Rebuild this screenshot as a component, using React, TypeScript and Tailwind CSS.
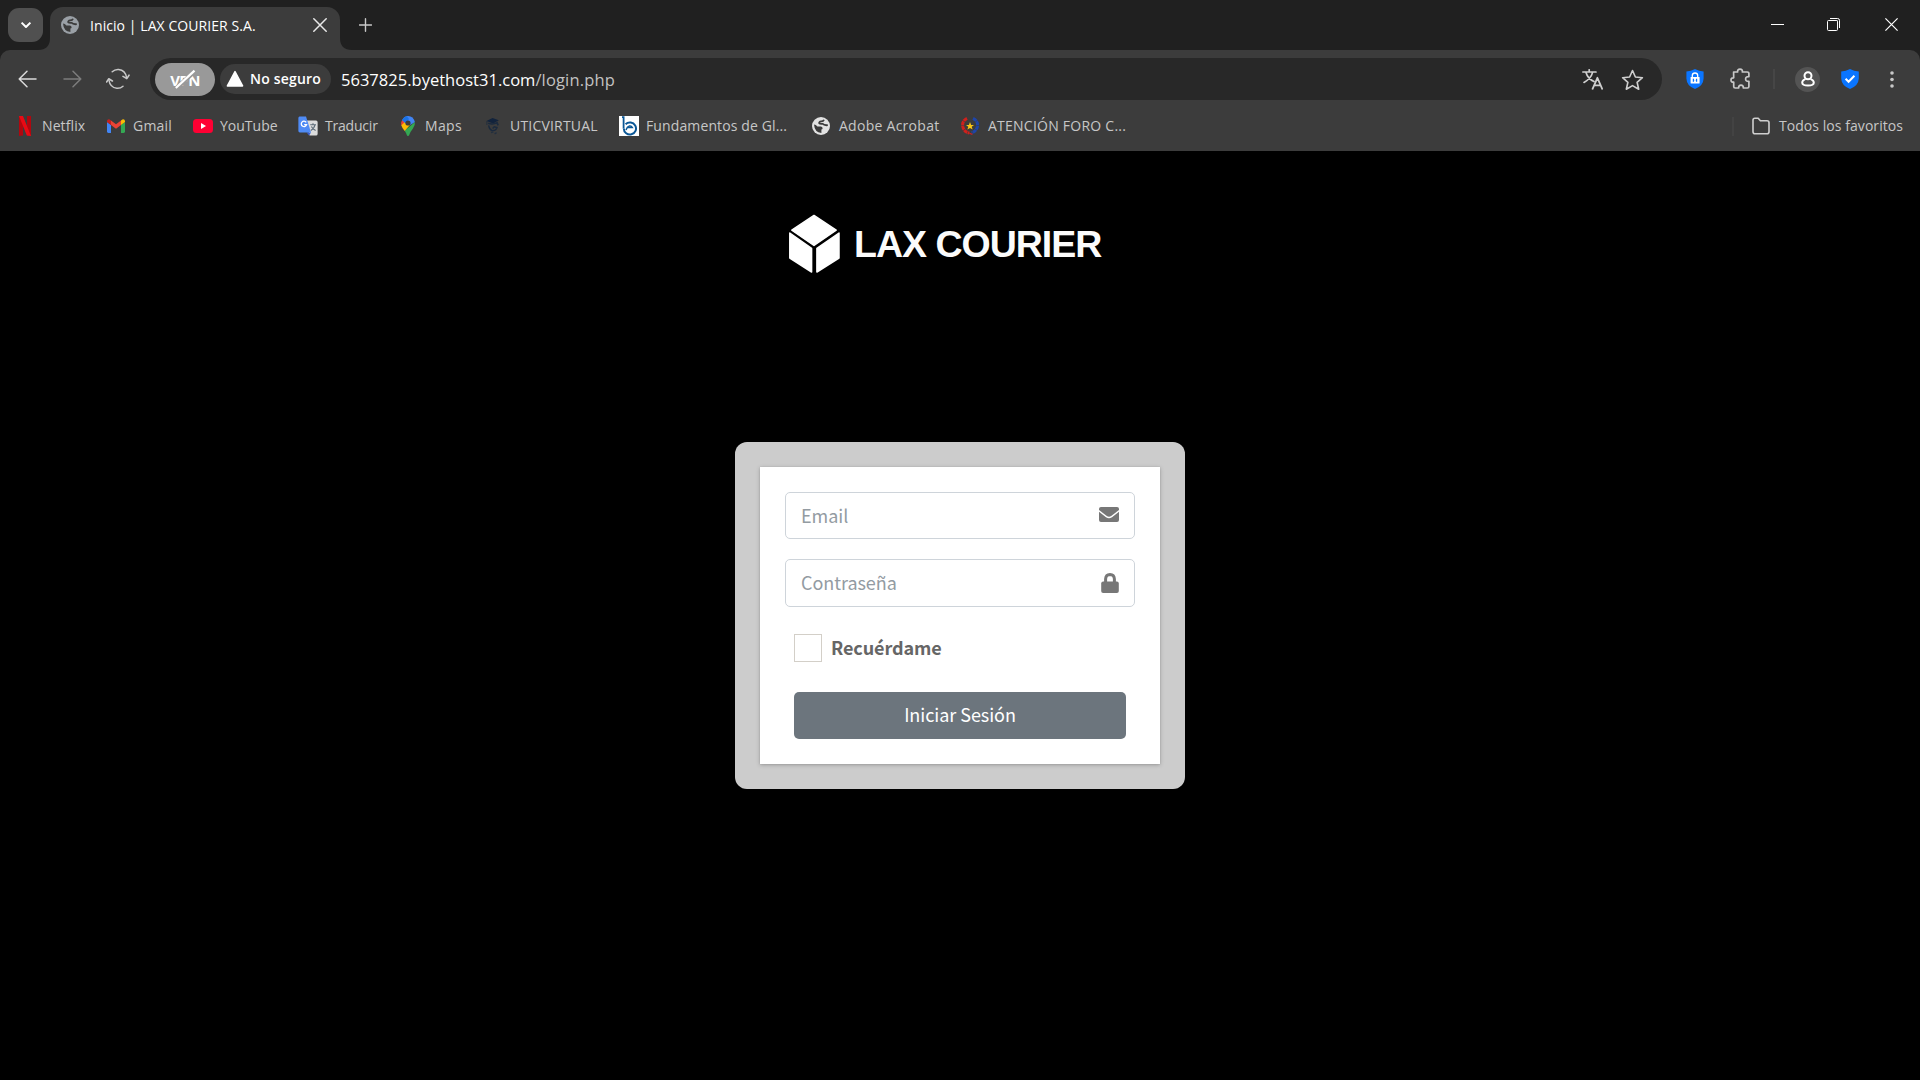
import React from "react";

const stroke = (w = 1.5, c = "#cfcfcf") => ({
  fill: "none",
  stroke: c,
  strokeWidth: w,
  strokeLinecap: "round" as const,
  strokeLinejoin: "round" as const,
});

function GlobeIcon({ color, size = 18 }: { color: string; size?: number }) {
  return (
    <svg width={size} height={size} viewBox="0 0 18 18">
      <circle cx="9" cy="9" r="9" fill={color} />
      <path d="M2 7.6Q4 7.6 5.4 9.4H9Q10.8 9.8 10.6 12L9.4 12.6V15.9Q2.6 15.6 2 7.6Z" fill="#3c3c3c" />
      <path d="M12 2.8Q11.4 4.4 9.2 4.4Q6.8 4.8 7.2 6.2Q7.8 7 10.6 6.8Q12 8.6 15.8 8.2" fill="none" stroke="#3c3c3c" strokeWidth="1.8" />
    </svg>
  );
}

function NetflixIcon() {
  return (
    <svg width="20" height="20" viewBox="0 0 20 20">
      <path d="M4 0H8V19.6L4 20Z" fill="#b0070f" />
      <path d="M12 0H16V20L12 19.6Z" fill="#b0070f" />
      <path d="M4 0H8L16 20L11.8 19.6Z" fill="#e90a14" />
    </svg>
  );
}

function GmailIcon() {
  return (
    <svg width="20" height="20" viewBox="0 0 20 20">
      <path d="M1 6V15.6Q1 17 2.3 17H5V9Z" fill="#4285f4" />
      <path d="M15 9V17H17.7Q19 17 19 15.6V6Z" fill="#34a853" />
      <path d="M5 9V4.6L10 8.3L15 4.6V9L10 12.8Z" fill="#ea4335" />
      <path d="M1 6V5Q1.2 3.2 3 3.3Q4 3.5 5 4.6V9Z" fill="#c5221f" />
      <path d="M19 6V5Q18.8 3.2 17 3.3Q16 3.5 15 4.6V9Z" fill="#fbbc04" />
    </svg>
  );
}

function YouTubeIcon() {
  return (
    <svg width="20" height="20" viewBox="0 0 20 20">
      <rect x="0" y="3" width="20" height="14" rx="3.5" fill="#ff0033" />
      <path d="M8 7L13 10L8 13Z" fill="#fff" />
    </svg>
  );
}

function TranslateAppIcon() {
  return (
    <svg width="20" height="20" viewBox="0 0 20 20">
      <path d="M8 4.5H18Q19.6 4.5 19.6 6V18Q19.6 19.5 18 19.5H11.5Z" fill="#dcdcdc" />
      <path d="M8.6 16.4H13L11 19.5Z" fill="#3a5bc7" />
      <path d="M1.5 0.5H8L13 16.4H1.8Q0.4 16.4 0.4 15V2Q0.4 0.5 1.5 0.5Z" fill="#4f8bf5" />
      <path d="M8.2 6.3A2.7 2.7 0 1 0 8.6 8.6H6.2" fill="none" stroke="#fff" strokeWidth="1.3" />
      <path d="M12.2 8.7H18M15 7.3V8.7M17 8.9Q16.2 12.6 12.8 14.4M13.4 10.4Q14.6 13 17.6 14.6" fill="none" stroke="#5c6b78" strokeWidth="1.1" />
    </svg>
  );
}

function MapsIcon() {
  return (
    <svg width="20" height="20" viewBox="0 0 20 20">
      <path d="M16.9 6.1Q17.4 9.6 14.8 12.8Q12 16.2 11.2 19Q10.9 20 10 20Q9.1 20 8.8 19Q8.4 17.2 6.6 14.8Z" fill="#34a853" />
      <path d="M4.1 4.1L7.8 5.2L7.6 8.6L3.4 9.6Q2.6 6.6 4.1 4.1Z" fill="#ea4335" />
      <path d="M3.3 9.3L7.6 5.6L11.9 9L6.7 15Q4 12 3.3 9.3Z" fill="#fbbc04" />
      <path d="M4.1 4.1Q6.2 0.2 10 0Q15.4 0.2 16.9 6.1L12.2 9.1L7.8 7.5Z" fill="#4285f4" />
      <path d="M4.1 4.1Q6 0.9 8.8 0.1L11 3L7.6 7.2Z" fill="#1a73e8" />
      <circle cx="10" cy="7" r="2.6" fill="#3c3c3c" />
    </svg>
  );
}

function UticIcon() {
  return (
    <svg width="20" height="20" viewBox="0 0 20 20">
      <path d="M3.5 5L9.5 2L15.8 4.2L10.2 7.4Z" fill="#12233c" />
      <path d="M5.2 7.2Q9.8 9 14 6.6L15.2 9.4" fill="none" stroke="#1b2a3e" strokeWidth="1.6" />
      <path d="M5.6 9.4Q6.4 13.6 9 14.6Q13 14.8 14 11.6L11.2 10.8L9.6 12.4" fill="none" stroke="#1b2a3e" strokeWidth="1.4" />
      <path d="M8 16.6L10.4 15.8M11.6 17.8L13.6 16.6" stroke="#222f40" strokeWidth="1.4" />
      <path d="M3.9 5.2V9" stroke="#1b2a3e" strokeWidth="0.8" />
    </svg>
  );
}

function BIcon() {
  return (
    <svg width="20" height="20" viewBox="0 0 20 20">
      <rect width="20" height="20" fill="#fff" />
      <path d="M3 1.2H4.6V12.4" fill="none" stroke="#0a5796" strokeWidth="1.8" />
      <path d="M4.8 12.4A6.1 6 0 1 0 6.6 8.2" fill="none" stroke="#0a5796" strokeWidth="2" />
      <path d="M8.2 11.6H13.4Q12.4 9.6 10.4 10Q8 10.8 7 14" fill="none" stroke="#0a5796" strokeWidth="1.4" />
    </svg>
  );
}

function ForoIcon() {
  return (
    <svg width="20" height="20" viewBox="0 0 20 20">
      <path d="M7 2.4Q1.8 5 2.8 10.6Q4 16 9.4 17" fill="none" stroke="#d0201c" strokeWidth="3" strokeDasharray="4 .5" />
      <path d="M13 2.4Q18.4 5 17.4 10.6Q16.2 15.4 11.6 16.8" fill="none" stroke="#1f45a8" strokeWidth="3" strokeDasharray="4 .5" />
      <path d="M9.4 17.2L12.4 18.4" stroke="#d0201c" strokeWidth="1.2" />
      <path d="M10 6L11.1 8.9H14L11.7 10.7L12.6 13.6L10 11.9L7.4 13.6L8.3 10.7L6 8.9H8.9Z" fill="#f9c515" />
    </svg>
  );
}

const bookmarks = [
  { label: "Netflix", icon: <NetflixIcon />, box: "w-[91px]", gap: "gap-[7px]", track: "tracking-[0.1px]" },
  { label: "Gmail", icon: <GmailIcon />, box: "w-[87px]", gap: "gap-[7px]", track: "tracking-[0.2px]" },
  { label: "YouTube", icon: <YouTubeIcon />, box: "w-[105px]", gap: "gap-[7px]", track: "" },
  { label: "Traducir", icon: <TranslateAppIcon />, box: "w-[100px]", gap: "gap-[7px]", track: "tracking-[-0.2px]" },
  { label: "Maps", icon: <MapsIcon />, box: "w-[85px]", gap: "gap-[7px]", track: "tracking-[0.35px]" },
  { label: "UTICVIRTUAL", icon: <UticIcon />, box: "w-[136px]", gap: "gap-[7px]", track: "tracking-[0.2px]" },
  { label: "Fundamentos de Gl...", icon: <BIcon />, box: "w-[192px]", gap: "gap-[7px]", track: "tracking-[0.12px]" },
  { label: "Adobe Acrobat", icon: <GlobeIcon color="#e2e2e2" />, box: "w-[149px]", gap: "gap-[8px]", track: "tracking-[0.27px]" },
  { label: "ATENCIÓN FORO C...", icon: <ForoIcon />, box: "w-[180px]", gap: "gap-[8px]", track: "tracking-[0.24px]" },
];

function TabStrip() {
  return (
    <div className="flex h-[50px] items-start bg-[#202020] pl-2">
      <div className="mt-2 flex h-[34px] w-[35px] items-center justify-center rounded-[11px] bg-[#505050]">
        <svg width="12" height="8" viewBox="0 0 12 8">
          <path d="M1.6 1.6L6 6L10.4 1.6" {...stroke(2, "#fff")} strokeLinecap="butt" />
        </svg>
      </div>
      <div className="relative mt-[7px] ml-[7px] flex h-[43px] w-[290px] items-center rounded-t-[13px] bg-[#3c3c3c] pl-[11px]">
        <svg className="absolute bottom-0 -left-3" width="12" height="12" viewBox="0 0 12 12">
          <path d="M12 0V12H0Q12 12 12 0Z" fill="#3c3c3c" />
        </svg>
        <svg className="absolute -right-3 bottom-0" width="12" height="12" viewBox="0 0 12 12">
          <path d="M0 0V12H12Q0 12 0 0Z" fill="#3c3c3c" />
        </svg>
        <div className="mb-[7px]">
          <GlobeIcon color="#9aa0a6" />
        </div>
        <span className="mb-[5px] ml-[11px] w-[223px] text-[14px] leading-5 tracking-[0.07px] text-white">Inicio | LAX COURIER S.A.</span>
        <svg className="mb-[7px] shrink-0" width="14" height="14" viewBox="0 0 14 14">
          <path d="M0.8 0.8L13.2 13.2M13.2 0.8L0.8 13.2" {...stroke(1.5, "#e8e8e8")} />
        </svg>
      </div>
      <svg className="mt-[18px] ml-[19px]" width="13" height="14" viewBox="0 0 13 14">
        <path d="M6.5 0.8V13.2M0.4 7H12.6" {...stroke(1.4, "#c9c9c9")} />
      </svg>
      <div className="mt-[18px] mr-[22px] ml-auto flex items-center gap-[44px]">
        <svg width="13" height="13" viewBox="0 0 13 13">
          <path d="M0 6.5H13" stroke="#fff" strokeWidth="1" />
        </svg>
        <svg width="13" height="13" viewBox="0 0 13 13" className="ml-[-1px]">
          <path d="M3 2.5H10.5V10" fill="none" stroke="#8f8f8f" strokeWidth="1" />
          <path d="M3 0.5H10.6Q12.5 0.5 12.5 2.4V10" fill="none" stroke="#fff" strokeWidth="1" />
          <rect x="0.5" y="2.5" width="10" height="10" rx="1" fill="none" stroke="#fff" strokeWidth="1" />
        </svg>
        <svg width="13" height="13" viewBox="0 0 13 13" className="ml-[1px]">
          <path d="M0.4 0.4L12.6 12.6M12.6 0.4L0.4 12.6" stroke="#fff" strokeWidth="1.2" />
        </svg>
      </div>
    </div>
  );
}

function AddressBar() {
  return (
    <div className="flex h-[42px] w-[1512px] shrink-0 items-center rounded-full bg-[#282828] pl-[5px]">
      <div className="flex h-[33px] w-[60px] items-center justify-center rounded-full bg-[#999]">
        <div className="relative flex w-[30px] justify-center">
          <span className="pt-[1px] text-[15px] leading-5 font-bold tracking-[-0.6px] text-white">VPN</span>
          <svg className="absolute top-0 left-[2px]" width="26" height="21" viewBox="0 0 26 21">
            <path d="M22 0L2 18.4L6 21L25 3Z" fill="#999" />
            <path d="M22.5 1.6L3.8 19" stroke="#fff" strokeWidth="2.2" />
          </svg>
        </div>
      </div>
      <div className="ml-[5px] flex h-[30px] w-[111px] items-center rounded-full bg-[#3c3c3c] pl-[6px]">
        <svg width="18" height="18" viewBox="0 0 18 18">
          <path d="M9 1.6L16.6 15.9H1.4Z" fill="#fff" stroke="#fff" strokeWidth="1.5" strokeLinejoin="round" />
        </svg>
        <span className="ml-[6px] text-[14px] leading-5 font-semibold tracking-[0.2px] whitespace-nowrap text-white">No seguro</span>
      </div>
      <span className="ml-[10px] pt-[1px] text-[16.5px] leading-6 tracking-[0.02px] text-white">
        5637825.byethost31.com<span className="tracking-[0.15px] text-[#c2c2c2]">/login.php</span>
      </span>
      <svg className="mt-[1px] mr-[18px] ml-auto" width="21" height="21" viewBox="0 0 21 21">
        <path d="M0.8 3H14M7.2 0.8V3M4 3.4Q5.6 9.2 12 12.6M10.6 3.4Q9 9.6 2 13.4" {...stroke(1.7)} />
        <path d="M10.6 19.8L15.4 8.8L20.2 19.8M12.2 16.4H18.6" {...stroke(1.8)} />
      </svg>
      <svg className="mt-[1px] mr-[18px]" width="23" height="22" viewBox="0 0 23 22">
        <path d="M11.5 1.5L14.4 8L21.4 8.7L16.1 13.3L17.7 20.2L11.5 16.6L5.3 20.2L6.9 13.3L1.6 8.7L8.6 8Z" {...stroke(1.6)} />
      </svg>
    </div>
  );
}

function Toolbar() {
  return (
    <div className="bg-[#202020]">
      <div className="flex h-[59px] items-center rounded-t-[10px] bg-[#3c3c3c] pb-[1px] pl-[18px]">
        <svg width="19" height="18" viewBox="0 0 19 18" className="shrink-0">
          <path d="M18 9H1.2M9 1.2L1.2 9L9 16.8" {...stroke(1.5, "#dadada")} />
        </svg>
        <svg width="19" height="18" viewBox="0 0 19 18" className="ml-[26px] shrink-0">
          <path d="M1 9H17.8M10 1.2L17.8 9L10 16.8" {...stroke(1.5, "#7c7c7c")} />
        </svg>
        <svg width="24" height="22" viewBox="0 0 24 22" className="ml-[24px] shrink-0">
          <path d="M6.2 3.8Q9 1.2 12.6 1.5Q19.4 2.2 20.6 9.6M17 18.2Q14.4 20.6 10.8 20.3Q4 19.4 2.9 12" {...stroke(1.5, "#c8c8c8")} />
          <path d="M17 8.4L20.8 10.6L23 7.2M0.6 14L2.8 10.8L6.4 13" {...stroke(1.6, "#c8c8c8")} />
        </svg>
        <div className="ml-[20px] flex">
          <AddressBar />
        </div>
        <svg width="18" height="20" viewBox="0 0 18 20" className="ml-[24px] shrink-0">
          <path d="M9 0Q13 2.4 17.6 2.6V9.6Q17.4 17 9 20Q0.6 17 0.4 9.6V2.6Q5 2.4 9 0Z" fill="#0a75ff" />
          <rect x="4.6" y="8" width="9" height="6.6" rx="0.6" fill="#fff" />
          <path d="M6.3 8V6.4Q6.4 4 9 4Q11.6 4 11.7 6.4V8" fill="none" stroke="#fff" strokeWidth="1.3" />
          <path d="M7.4 9.8V12.8M10.6 9.8V12.8M7.4 11.3H8.2M9.8 11.3H10.6" stroke="#0a75ff" strokeWidth="1.2" />
        </svg>
        <svg width="22" height="22" viewBox="0 0 22 22" className="ml-[26px] shrink-0">
          <path
            d="M3.6 4H7.6Q7.3 1.2 10 1.2Q12.7 1.2 12.4 4H17.2Q18.9 4 18.9 5.6V8.6Q15.6 8.4 15.6 11Q15.6 13.6 18.9 13.4V18.6Q18.9 20 17.4 20H13.4Q13.4 17.2 11 17.2Q8.6 17.2 8.6 20H5.2Q3.7 20 3.7 18.6V14.2Q1 14.4 1 12Q1 9.6 3.7 9.8Z"
            {...stroke(1.7, "#c8c8c8")}
          />
        </svg>
        <div className="ml-[21px] h-5 w-[2px] shrink-0 bg-[#464646]" />
        <div className="ml-[20px] flex size-[25px] shrink-0 items-center justify-center rounded-full bg-[#545454]">
          <svg width="14" height="16" viewBox="0 0 14 16">
            <circle cx="7" cy="4.8" r="3.5" {...stroke(2, "#fff")} />
            <path d="M3.8 8.4Q1.2 9.4 1.2 11.8Q1.4 14.6 7 14.6Q12.6 14.6 12.8 11.8Q12.8 9.4 10.2 8.4" {...stroke(2, "#fff")} />
          </svg>
        </div>
        <svg width="18" height="20" viewBox="0 0 18 20" className="ml-[21px] shrink-0">
          <path d="M9 0Q13 2.4 17.8 2.6V9.6Q17.4 17 9 20Q0.6 17 0.2 9.6V2.6Q5 2.4 9 0Z" fill="#0a75ff" />
          <path d="M4.6 9.8L7.6 12.8L13.4 6.8" fill="none" stroke="#fff" strokeWidth="2" />
        </svg>
        <svg width="4" height="17" viewBox="0 0 4 17" className="ml-[31px] shrink-0">
          <circle cx="2" cy="2" r="1.8" fill="#c8c8c8" />
          <circle cx="2" cy="8.5" r="1.8" fill="#c8c8c8" />
          <circle cx="2" cy="15" r="1.8" fill="#c8c8c8" />
        </svg>
      </div>
      <div className="flex h-[42px] items-start bg-[#3c3c3c] pt-[7px] pr-[17px] pl-[15px]">
        {bookmarks.map((b) => (
          <div key={b.label} className={`flex h-5 shrink-0 items-center ${b.gap} ${b.box}`}>
            <div className="flex size-5 items-center justify-center">{b.icon}</div>
            <span className={`text-[14px] leading-5 whitespace-nowrap text-[#c7c7c7] ${b.track}`}>{b.label}</span>
          </div>
        ))}
        <div className="ml-auto flex h-5 items-center">
          <div className="mr-[18px] h-[19px] w-[2px] bg-[#434343]" />
          <svg width="18" height="18" viewBox="0 0 18 18">
            <path d="M1 3Q1 1.2 2.8 1.2H6.2L8.4 3.8H15Q17 3.8 17 5.8V14.8Q17 16.8 15 16.8H3Q1 16.8 1 14.8Z" {...stroke(1.6)} />
          </svg>
          <span className="ml-[9px] text-[14px] leading-5 tracking-[0.06px] text-[#c7c7c7]">Todos los favoritos</span>
        </div>
      </div>
    </div>
  );
}

function Logo() {
  return (
    <div className="ml-[788px] flex h-[62px] items-center">
      <svg width="53" height="62" viewBox="0 0 53 62" className="shrink-0">
        <g fill="#fff" stroke="#fff" strokeWidth="1.5" strokeLinejoin="round">
          <path d="M26 2.4L48.2 17.2L26 32.4L3.8 17.2Z" />
          <path d="M1.8 20L23.6 35.4V59L1.8 45Z" />
          <path d="M51 20L28.9 35.4V59L51 45Z" />
        </g>
      </svg>
      <span className="mt-[2px] ml-[13px] font-['Liberation_Sans'] text-[37.5px] leading-none font-bold tracking-[-1px] whitespace-nowrap text-[#fbfbfb]">
        LAX COURIER
      </span>
    </div>
  );
}

function LoginCard() {
  return (
    <div className="mx-auto h-[347px] w-[450px] rounded-[12px] bg-[#ccc] p-[25px] font-['Noto_Sans_CJK_SC','Noto_Sans',sans-serif]">
      <div className="h-[297px] bg-white p-[25px] shadow-[0_0_1px_rgba(0,0,0,0.13),0_1px_4px_rgba(0,0,0,0.25)]">
        <div className="flex h-[47px] items-center justify-between rounded-[5px] border border-[#ced4da] pr-[15px] pl-[15px]">
          <span className="mb-[2px] text-[18px] leading-6 tracking-[-0.05px] text-[#939ba2]">Email</span>
          <svg width="20" height="15" viewBox="0 0 20 15" className="mb-[2px]">
            <path d="M2 0H18Q20 0 20 2V3L12.2 9Q10 10.6 7.8 9L0 3V2Q0 0 2 0Z" fill="#777" />
            <path d="M0 4.8L7 10.2Q10 12.3 13 10.2L20 4.8V13Q20 15 18 15H2Q0 15 0 13Z" fill="#777" />
          </svg>
        </div>
        <div className="mt-5 flex h-[48px] items-center justify-between rounded-[5px] border border-[#ced4da] pr-[15px] pl-[15px]">
          <span className="mb-[2px] text-[18px] leading-6 tracking-[-0.05px] text-[#939ba2]">Contraseña</span>
          <svg width="18" height="20" viewBox="0 0 18 20">
            <path d="M4.6 9V6Q4.8 1.6 9 1.5Q13.2 1.6 13.4 6V9" fill="none" stroke="#777" strokeWidth="3" />
            <rect x="0.2" y="8.6" width="17.6" height="11.4" rx="1.9" fill="#777" />
          </svg>
        </div>
        <div className="mt-[27px] ml-[9px] flex h-7 items-center">
          <div className="size-7 border border-[#d3cfc8] bg-white" />
          <span className="mb-[2px] ml-[9px] text-[18px] leading-6 font-bold tracking-[-0.1px] text-[#666]">Recuérdame</span>
        </div>
        <div className="mx-[9px] mt-[30px] flex h-[47px] items-center justify-center rounded-[5px] bg-[#6c757d] pb-[3px] text-[18px] leading-6 tracking-[-0.05px] text-white">
          Iniciar Sesión
        </div>
      </div>
    </div>
  );
}

export default function App() {
  return (
    <div className="h-[1080px] w-[1920px] overflow-hidden bg-black font-['Open_Sans','Noto_Sans',sans-serif]">
      <TabStrip />
      <Toolbar />
      <div className="pt-[62px]">
        <Logo />
        <div className="mt-[167px]">
          <LoginCard />
        </div>
      </div>
    </div>
  );
}
